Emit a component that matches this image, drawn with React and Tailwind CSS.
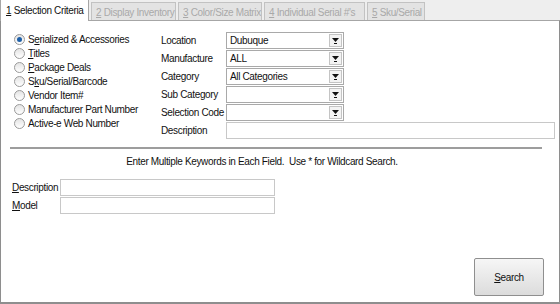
import React from 'react';

const font = { fontFamily: '"Liberation Sans", Arial, sans-serif' };

function Radio({ label, u, checked }) {
  const idx = label.indexOf(u);
  return (
    <div className="flex items-center h-[14px]">
      <span className="w-[11px] h-[11px] rounded-full border border-[#9a9a9a] bg-gradient-to-b from-[#e4e4e4] to-[#ffffff] flex items-center justify-center mr-[3px] shrink-0">
        {checked && <span className="w-[5px] h-[5px] rounded-full bg-[#1d5fa8]" />}
      </span>
      <span className="whitespace-nowrap">
        {u ? (
          <>
            {label.slice(0, idx)}
            <span className="underline">{u}</span>
            {label.slice(idx + 1)}
          </>
        ) : label}
      </span>
    </div>
  );
}

function Select({ value }) {
  return (
    <div className="w-[118px] h-[17px] border border-[#a9a9a9] bg-white flex items-center">
      <span className="flex-1 pl-[3px] leading-none whitespace-nowrap">{value}</span>
      <span className="w-[13px] h-[13px] mr-[1px] border border-[#c4c4c4] bg-[#f3f3f3] flex flex-col items-center justify-center">
        <svg width="7" height="6" viewBox="0 0 7 6">
          <path d="M0 0h7L3.5 4z" fill="#111" />
          <rect x="2" y="5" width="3" height="1" fill="#111" />
        </svg>
      </span>
    </div>
  );
}

export default function App() {
  const tabs = [
    ['2', ' Display Inventory', 'w-[85px]'],
    ['3', ' Color/Size Matrix', 'w-[84px]'],
    ['4', ' Individual Serial #\'s', 'w-[101px]'],
    ['5', ' Sku/Serial', 'w-[58px]'],
  ];
  const radios = [
    ['Serialized & Accessories', 'e', true],
    ['Titles', 'T'],
    ['Package Deals', 'P'],
    ['Sku/Serial/Barcode', 'k'],
    ['Vendor Item#', ''],
    ['Manufacturer Part Number', ''],
    ['Active-e Web Number', ''],
  ];
  const fields = [
    ['Location', 'Dubuque'],
    ['Manufacture', 'ALL'],
    ['Category', 'All Categories'],
    ['Sub Category', ''],
    ['Selection Code', ''],
  ];

  return (
    <div className="w-[560px] h-[304px] bg-[#eeeeee] flex flex-col text-[10px] tracking-[-0.35px] text-[#111]" style={font}>
      <div className="h-[21px] flex items-end">
        <div className="w-[89px] h-[21px] bg-white border-l border-r border-[#a6a6a6] flex items-center pl-[5px] text-[#111] relative z-10 whitespace-nowrap">
          <span className="underline">1</span>&nbsp;Selection Criteria
        </div>
        {tabs.map(([n, t, w]) => (
          <div key={n} className={`${w} h-[19px] ml-[2px] bg-[#e3e3e3] border border-b-0 border-[#c2c2c2] flex items-center pl-[4px] text-[#a9a9a9] whitespace-nowrap overflow-hidden`}>
            <span className="underline">{n}</span>&nbsp;{t.trim()}
          </div>
        ))}
      </div>
      <div className="flex-1 bg-white border-x border-b-2 border-[#8e8e8e] border-t border-t-[#a6a6a6] -mt-px flex flex-col">
        <div className="flex pt-[11px]">
          <div className="w-[160px] pl-[13px] flex flex-col">
            {radios.map(([l, u, c]) => (
              <Radio key={l} label={l} u={u} checked={c} />
            ))}
          </div>
          <div className="flex flex-col gap-[1px]">
            {fields.map(([l, v]) => (
              <div key={l} className="flex items-center h-[17px]">
                <span className="w-[65px] whitespace-nowrap">{l}</span>
                <Select value={v} />
              </div>
            ))}
            <div className="flex items-center h-[17px]">
              <span className="w-[65px] whitespace-nowrap">Description</span>
              <div className="w-[329px] h-[17px] border border-[#c8c8c8] bg-white" />
            </div>
          </div>
        </div>
        <div className="ml-[9px] w-[532px] mt-[8px] border-t-2 border-[#9d9d9d]" />
        <div className="ml-[9px] w-[504px] text-center mt-[5px] whitespace-nowrap">
          Enter Multiple Keywords in Each Field.&nbsp; Use * for Wildcard Search.
        </div>
        <div className="flex flex-col gap-[1px] mt-[10px] pl-[11px]">
          <div className="flex items-center h-[17px]">
            <span className="w-[48px] whitespace-nowrap"><span className="underline">D</span>escription</span>
            <div className="w-[215px] h-[17px] border border-[#c8c8c8] bg-white" />
          </div>
          <div className="flex items-center h-[17px]">
            <span className="w-[48px] whitespace-nowrap"><span className="underline">M</span>odel</span>
            <div className="w-[215px] h-[17px] border border-[#c8c8c8] bg-white" />
          </div>
        </div>
        <div className="flex-1 flex items-end justify-end pr-[15px] pb-[6px]">
          <button className="w-[70px] h-[38px] rounded-[2px] border border-[#8f8f8f] bg-gradient-to-b from-[#f6f6f6] to-[#dcdcdc] text-[10px] tracking-[-0.35px] text-[#111]">
            <span className="underline">S</span>earch
          </button>
        </div>
      </div>
    </div>
  );
}
